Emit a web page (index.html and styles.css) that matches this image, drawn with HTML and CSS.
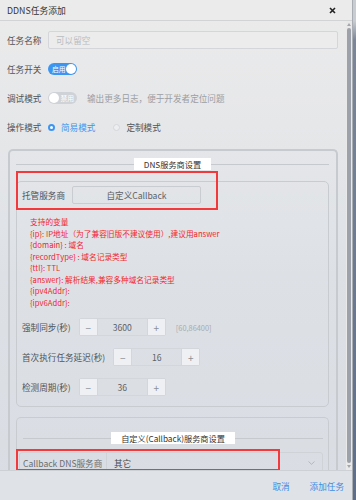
FILE: index.html
```html
<!DOCTYPE html>
<html lang="zh-CN">
<head>
    <meta charset="UTF-8">
    <meta name="viewport" content="width=device-width, initial-scale=1.0">
    <title>DDNS任务添加</title>
    <link rel="stylesheet" href="styles.css">
</head>
<body>
    <div class="dialog">
        <div class="dlg-head">
            <span class="dlg-title">DDNS任务添加</span>
            <svg class="dlg-close" width="7" height="7" viewBox="0 0 7 7"><path d="M1 1L6 6M6 1L1 6" stroke="#222" stroke-width="1.6"/></svg>
        </div>

        <div class="dlg-body">
            <div class="scroll-area">
                <div class="form-row">
                    <label class="row-label">任务名称</label>
                    <div class="text-input">可以留空</div>
                </div>
                <div class="form-row">
                    <label class="row-label">任务开关</label>
                    <div class="switch on"><span class="switch-text">启用</span><span class="knob"></span></div>
                </div>
                <div class="form-row">
                    <label class="row-label">调试模式</label>
                    <div class="switch off"><span class="knob"></span><span class="switch-text">禁用</span></div>
                    <span class="hint">输出更多日志，便于开发者定位问题</span>
                </div>
                <div class="form-row last">
                    <label class="row-label">操作模式</label>
                    <div class="radio checked"><span class="dot"></span>简易模式</div>
                    <div class="radio"><span class="dot"></span>定制模式</div>
                </div>

                <div class="settings-box">
                    <div class="legend-line"><span class="legend">DNS服务商设置</span></div>

                    <div class="panel panel-dns">
                        <div class="mark mark-dns"></div>
                        <div class="panel-row">
                            <span class="panel-label">托管服务商</span>
                            <div class="provider-btn">自定义Callback</div>
                        </div>
                        <div class="vars">
                            <div>支持的变量</div>
                            <div>{ip}: IP地址（为了兼容旧版不建议使用）,建议用answer</div>
                            <div>{domain} : 域名</div>
                            <div>{recordType} : 域名记录类型</div>
                            <div>{ttl}: TTL</div>
                            <div>{answer}: 解析结果,兼容多种域名记录类型</div>
                            <div>{ipv4Addr}:</div>
                            <div>{ipv6Addr}:</div>
                        </div>
                        <div class="num-row">
                            <span class="num-label">强制同步(秒)</span>
                            <div class="num-input"><span class="num-btn">−</span><span class="num-val">3600</span><span class="num-btn">+</span></div>
                            <span class="range">[60,86400]</span>
                        </div>
                        <div class="num-row">
                            <span class="num-label">首次执行任务延迟(秒)</span>
                            <div class="num-input"><span class="num-btn">−</span><span class="num-val">16</span><span class="num-btn">+</span></div>
                        </div>
                        <div class="num-row">
                            <span class="num-label">检测周期(秒)</span>
                            <div class="num-input"><span class="num-btn">−</span><span class="num-val">36</span><span class="num-btn">+</span></div>
                        </div>
                    </div>

                    <div class="panel panel-callback">
                        <div class="mark mark-callback"></div>
                        <div class="legend-line inset"><span class="legend">自定义(Callback)服务商设置</span></div>
                        <div class="select-group">
                            <span class="prepend">Callback DNS服务商</span>
                            <div class="select">
                                <span>其它</span>
                                <svg width="7" height="4" viewBox="0 0 7 4"><path d="M0.5 0.5L3.5 3.3L6.5 0.5" fill="none" stroke="#a9adb3" stroke-width="0.8"/></svg>
                            </div>
                        </div>
                    </div>
                </div>
            </div>
            <div class="scrollbar">
                <span class="arrow up"></span>
                <span class="thumb"></span>
                <span class="arrow down"></span>
            </div>
        </div>

        <div class="dlg-foot">
            <span class="foot-btn">取消</span>
            <span class="foot-btn">添加任务</span>
        </div>
    </div>
</body>
</html>
```

FILE: styles.css
```css
* {
    box-sizing: border-box;
}
body {
    margin: 0;
    width: 356px;
    height: 500px;
    overflow: hidden;
    font-family: "Noto Sans CJK SC", "Noto Sans", sans-serif;
    font-size: 8.6px;
    color: #505358;
    background: linear-gradient(180deg, #c9ccd0 0, #c9ccd0 21px, #7c8697 40px, #5e6e89 100%);
}
.dialog {
    width: 353px;
    height: 500px;
    display: flex;
    flex-direction: column;
    background: linear-gradient(180deg, #ebebeb 0%, #e6e7e9 25%, #dde1e6 55%, #d9dde3 100%);
    border-right: 1px solid #a9adb4;
}
.dlg-head {
    height: 21px;
    flex: none;
    display: flex;
    align-items: center;
    justify-content: space-between;
    padding: 0 16px 0 7px;
    background-color: #ebebeb;
    border-bottom: 1px solid #d2d3d5;
}
.dlg-title {
    color: #333;
    font-size: 8.8px;
}
.dlg-body {
    flex: 1;
    display: flex;
    overflow: hidden;
}
.scroll-area {
    flex: 1;
    overflow: hidden;
    padding-top: 10px;
}
.scrollbar {
    width: 6px;
    flex: none;
    display: flex;
    flex-direction: column;
    align-items: center;
    background-color: #e9e9ea;
    padding: 2px 0;
}
.arrow {
    width: 0;
    height: 0;
    border-left: 2px solid transparent;
    border-right: 2px solid transparent;
}
.arrow.up {
    border-bottom: 3px solid #a3a6ab;
}
.arrow.down {
    border-top: 3px solid #a3a6ab;
}
.thumb {
    flex: 1;
    width: 4px;
    margin: 2px 0;
    border-radius: 2px;
    background-color: #9da1a9;
}

/* rows */
.form-row {
    display: flex;
    align-items: center;
    height: 18px;
    margin-bottom: 11px;
    padding-left: 7px;
}
.form-row.last {
    margin-bottom: 13px;
}
.row-label {
    width: 41px;
    flex: none;
    color: #4f5257;
}
.text-input {
    width: 290px;
    height: 18px;
    line-height: 16px;
    padding-left: 7px;
    border: 1px solid #d4d6d9;
    border-radius: 2px;
    color: #b9bcc0;
    background-color: #ececec;
}
.switch {
    width: 29px;
    height: 12px;
    border-radius: 6px;
    display: flex;
    align-items: center;
    justify-content: space-between;
    padding: 0 1px;
    font-size: 6.8px;
    line-height: 1;
    white-space: nowrap;
    color: white;
}
.switch.on {
    background-color: #3d95f2;
    padding-left: 4px;
}
.switch.off {
    background-color: #cfd2d7;
    padding-right: 3px;
}
.knob {
    width: 10px;
    height: 10px;
    flex: none;
    border-radius: 50%;
    background-color: white;
}
.hint {
    margin-left: 10px;
    color: #9a9ea4;
}
.radio {
    display: flex;
    align-items: center;
    margin-right: 18px;
    color: #4f5257;
}
.radio .dot {
    width: 7px;
    height: 7px;
    border-radius: 50%;
    border: 1px solid #d4d7db;
    background-color: #eceef0;
    margin-right: 6px;
}
.radio.checked {
    color: #3d95f2;
}
.radio.checked .dot {
    border: 2px solid #3d95f2;
    background-color: white;
}

/* settings */
.settings-box {
    margin-left: 8px;
    width: 330px;
    height: 400px;
    border: 2px solid #c7cbd0;
    border-bottom: none;
    border-radius: 5px 5px 0 0;
    padding: 7px 7px 0 6px;
}
.legend-line {
    display: flex;
    align-items: center;
    height: 12px;
}
.legend-line::before,
.legend-line::after {
    content: "";
    flex: 1;
    height: 1px;
    background-color: #c6cacf;
}
.legend {
    background-color: white;
    color: #333;
    font-size: 8.2px;
    line-height: 12px;
    padding: 0 10px;
}
.panel {
    position: relative;
    border: 1px solid #c8ccd1;
    border-radius: 5px;
}
.panel-dns {
    margin-top: 11px;
    padding: 4px 5px 10px 5px;
}
.panel-row {
    display: flex;
    align-items: center;
    height: 18px;
}
.panel-label {
    width: 50px;
    flex: none;
}
.provider-btn {
    width: 129px;
    height: 18px;
    line-height: 16px;
    text-align: center;
    border: 1px solid #c9cdd2;
    border-radius: 2px;
    color: #5e6166;
}
.vars {
    margin: 12px 0 10px 8px;
    color: #f3262a;
    font-size: 7.7px;
    line-height: 11.5px;
}
.num-row {
    display: flex;
    align-items: center;
    height: 18px;
    margin-bottom: 12px;
}
.num-row:last-child {
    margin-bottom: 0;
}
.num-label {
    margin-right: 8px;
}
.num-input {
    display: flex;
    width: 87px;
    height: 18px;
    border: 1px solid #d3d7dc;
    border-radius: 2px;
}
.num-btn {
    width: 18px;
    flex: none;
    display: flex;
    align-items: center;
    justify-content: center;
    background-color: #eef0f3;
    color: #8b9096;
    font-size: 10px;
}
.num-btn:first-child {
    border-right: 1px solid #d3d7dc;
}
.num-btn:last-child {
    border-left: 1px solid #d3d7dc;
}
.num-val {
    flex: 1;
    text-align: center;
    line-height: 16px;
    color: #5e6166;
}
.range {
    margin-left: 10px;
    color: #a6abb1;
    font-size: 7.4px;
}
.panel-callback {
    margin-top: 10px;
    height: 80px;
    padding: 14px 5px 0 2px;
    border-bottom: none;
}
.legend-line.inset {
    margin-left: 4px;
}
.select-group {
    display: flex;
    height: 22px;
    margin-top: 8px;
    border: 1px solid #cfd3d8;
    border-radius: 3px;
}
.prepend {
    width: 87px;
    flex: none;
    padding-left: 3px;
    line-height: 20px;
    color: #6a6d72;
    border-right: 1px solid #cfd3d8;
}
.select {
    flex: 1;
    display: flex;
    align-items: center;
    justify-content: space-between;
    padding: 0 7px;
    color: #45484d;
}

/* red annotation frames */
.mark {
    position: absolute;
    border: 2px solid #f23a3d;
}
.mark-dns {
    left: -1px;
    top: -11px;
    width: 202px;
    height: 39px;
}
.mark-callback {
    left: -1px;
    top: 31px;
    width: 264px;
    height: 22px;
}

.dlg-foot {
    height: 30px;
    flex: none;
    display: flex;
    justify-content: flex-end;
    align-items: center;
    gap: 20px;
    padding-right: 8px;
    background-color: #dfe2e6;
    border-top: 1px solid #cdd1d6;
}
.foot-btn {
    color: #3a8ee6;
}
```
